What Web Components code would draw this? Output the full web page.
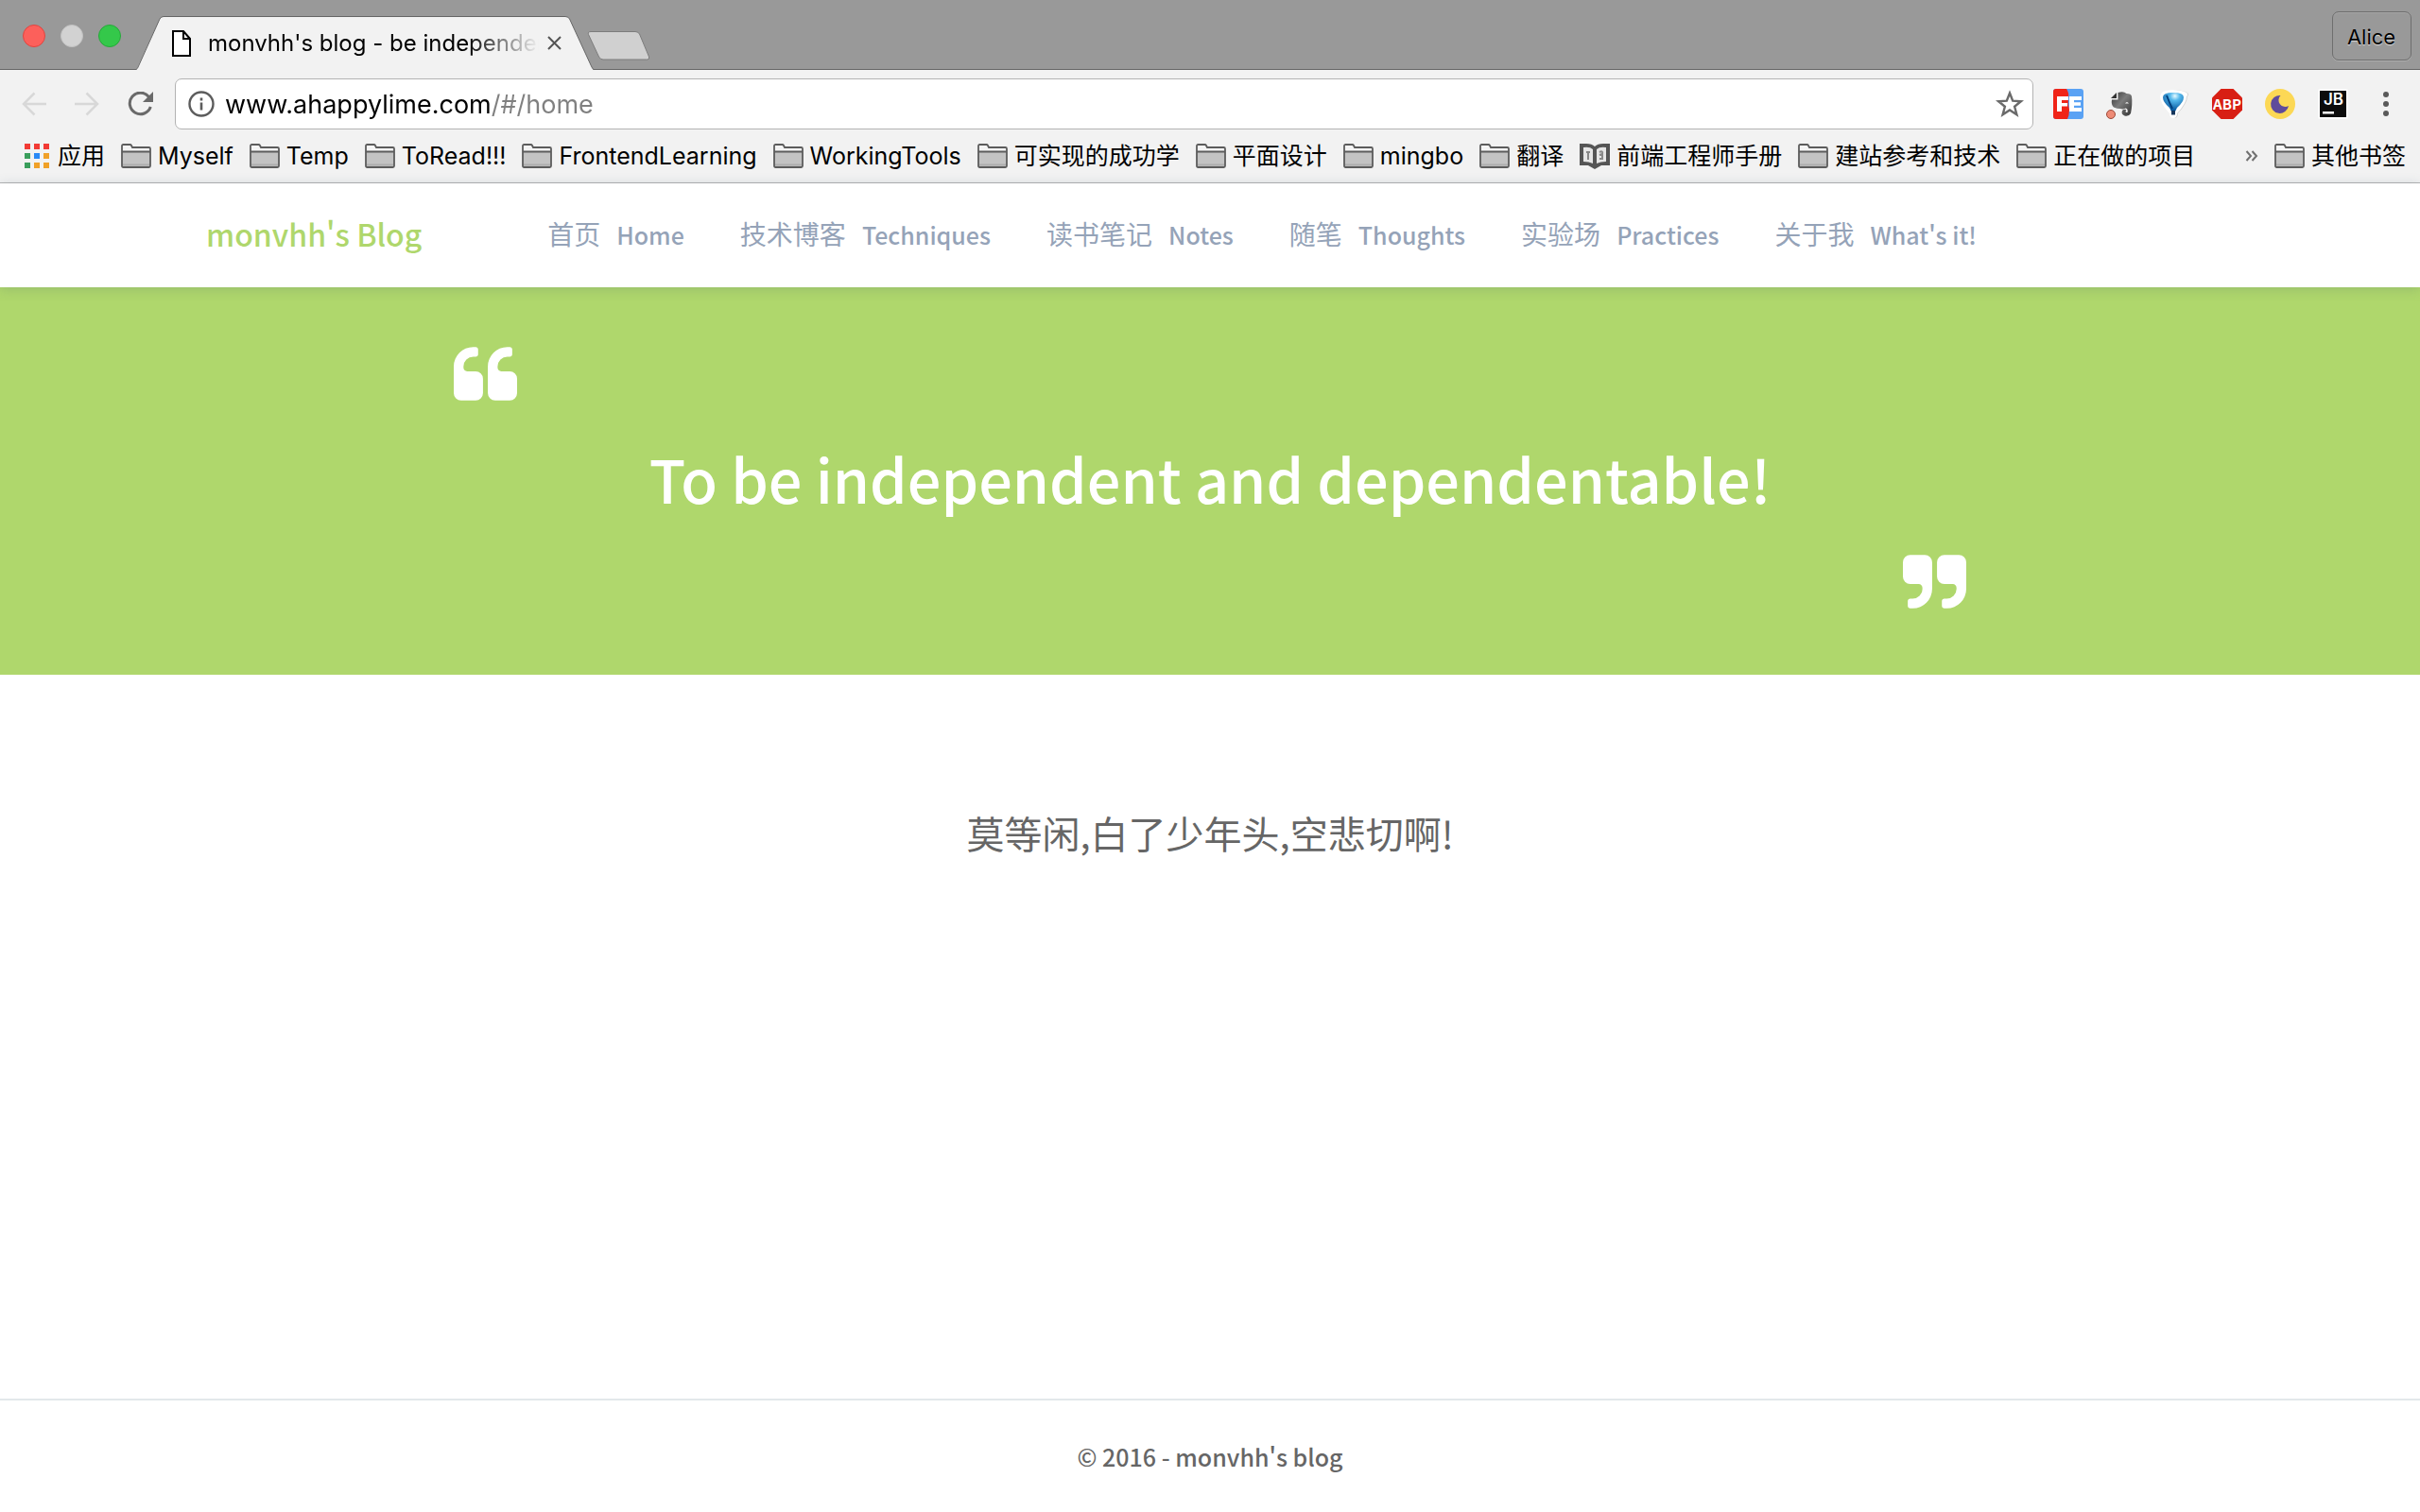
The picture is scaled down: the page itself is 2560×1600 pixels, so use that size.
<!DOCTYPE html>
<html lang="zh-CN">
<head>
<meta charset="utf-8">
<title>monvhh's blog - be independent</title>
<style>
  body { margin: 0; background: #fff; }
</style>
</head>
<body>
<blog-window></blog-window>

<template id="t-window">
  <style>
    :host { display: flex; flex-direction: column; min-height: 100vh; font-family: "Noto Sans CJK SC", sans-serif; color: #666; background: #fff; }
    blog-main { flex: 1; }
  </style>
  <tab-strip></tab-strip>
  <tool-bar></tool-bar>
  <bookmarks-bar></bookmarks-bar>
  <blog-header></blog-header>
  <blog-quote>To be independent and dependentable!</blog-quote>
  <blog-main>莫等闲,白了少年头,空悲切啊!</blog-main>
  <blog-footer>© 2016 - monvhh's blog</blog-footer>
</template>

<template id="t-tabs">
  <style>
    :host { display: flex; align-items: flex-end; height: 74px; padding: 0 9px 0 24px; box-sizing: border-box;
      background: linear-gradient(#666, #666) bottom / 100% 1px no-repeat #999; font-family: Inter, sans-serif; color: #000; }
    button { border: 0; padding: 0; margin: 0; background: none; font: inherit; color: inherit; display: block; }
    svg { display: block; }
    .lights { display: flex; gap: 16px; padding-bottom: 24px; margin-right: 16px; }
    .lights button { width: 24px; height: 24px; border-radius: 50%; box-sizing: border-box; border: 1px solid var(--rim); background: var(--fill); }
    .close { --fill: #fc605b; --rim: #e0443f; }
    .min { --fill: #d2d2d2; --rim: #c2c2c2; }
    .max { --fill: #34c84a; --rim: #27a83a; }
    .tab { position: relative; display: flex; align-items: center; width: 484px; height: 57px; box-sizing: border-box; padding: 0 34px 0 38px; }
    .shape { position: absolute; inset: 0; }
    .tab > :not(.shape) { position: relative; }
    .title { flex: 1; margin: 0 9px 0 18px; overflow: hidden; white-space: nowrap; font-size: 24px; line-height: 36px;
      -webkit-mask-image: linear-gradient(90deg, #000 78%, transparent); mask-image: linear-gradient(90deg, #000 78%, transparent); }
    .new { margin: 0 0 9px -7px; }
    .user { margin: 0 0 10px auto; width: 84px; height: 52px; box-sizing: border-box; border: 1px solid #6e6e6e; border-radius: 7px;
      padding: 2px 1px 0 0; font-size: 22px; text-shadow: 0 1px 1px #ddd; box-shadow: 0 1px 0 #adadad, inset 0 1px 0 #a6a6a6; }
  </style>
  <div class="lights">
    <button class="close" aria-label="Close window"></button>
    <button class="min" aria-label="Minimise"></button>
    <button class="max" aria-label="Zoom"></button>
  </div>
  <div class="tab">
    <svg class="shape" width="484" height="57" viewBox="0 0 484 57"><path d="M0 57 L1 55.500 L25 3 Q26.500 .5 29 .5 H454 Q457 .5 458.500 3 L482 54 Q483 56.500 484 57z" fill="#f2f2f2"/><path d="M0 56.500 Q1.500 56 2.500 53 L25 3 Q26.500 .5 29 .5 H454 Q457 .5 458.500 3 L481.500 53 Q483 56.500 484 56.500" fill="none" stroke="#666"/></svg>
    <svg width="20" height="28" viewBox="0 0 20 28"><path d="M1 1h11l7 8v18H1z" fill="#fff" stroke="#000" stroke-width="2"/><path d="M12 1v8h7" fill="none" stroke="#000" stroke-width="2"/></svg>
    <span class="title">monvhh's blog - be independent</span>
    <button aria-label="Close tab"><svg width="15" height="15" viewBox="0 0 15 15"><path d="M1 1l13 13M14 1L1 14" stroke="#555" stroke-width="2" fill="none"/></svg></button>
  </div>
  <button class="new" aria-label="New tab"><svg width="67" height="33" viewBox="0 0 67 33"><path d="M4 1.500H51Q54 1.500 55.500 4L65.500 28Q66.500 31 63.500 31H17Q14 31 12.500 28L1.500 4.500Q.5 1.500 4 1.500z" fill="#d0d0d0" stroke="#7c7c7c"/></svg></button>
  <button class="user">Alice</button>
</template>

<template id="t-tool">
  <style>
    :host { display: flex; align-items: center; padding: 9px 33px 0 23px; background: #f2f2f2; font-family: Inter, sans-serif; }
    button { border: 0; padding: 0; margin: 0; background: none; display: block; }
    svg { display: block; }
    .nav { display: flex; gap: 30px; margin-right: 23px; }
    .box { flex: 1; display: flex; align-items: center; height: 54px; box-sizing: border-box; padding: 0 9px 0 13px; border: 1px solid #b3b3b3; border-radius: 7px; background: #fff; }
    input { flex: 1; min-width: 0; margin: 0 12px 0 11px; padding: 2px 0 0; border: 0; outline: 0; font: 27px/40px Inter, sans-serif; color: #808080;
      background: linear-gradient(90deg, #000 280px, #808080 280px); -webkit-background-clip: text; background-clip: text; -webkit-text-fill-color: transparent; }
    .ext { display: flex; gap: 24px; margin: 0 37px 0 21px; }
  </style>
  <div class="nav">
    <button aria-label="Back"><svg width="26" height="26" viewBox="0 0 26 26"><path d="M26 13H2M13.500 1.500L2 13l11.500 11.500" fill="none" stroke="#d8d8d8" stroke-width="2.500"/></svg></button>
    <button aria-label="Forward"><svg width="26" height="26" viewBox="0 0 26 26"><path d="M0 13h24M12.500 1.500L24 13 12.500 24.500" fill="none" stroke="#d8d8d8" stroke-width="2.500"/></svg></button>
    <button aria-label="Reload"><svg width="27" height="26" viewBox="0 0 27 26"><path d="M22.500 5.500A11.300 11.300 0 1 0 24.300 16" fill="none" stroke="#6a6a6a" stroke-width="3"/><path d="M27 0v11H16z" fill="#6a6a6a"/></svg></button>
  </div>
  <div class="box">
    <svg width="28" height="28" viewBox="0 0 28 28"><circle cx="14" cy="14" r="12.500" fill="none" stroke="#5c5c5c" stroke-width="2.400"/><path d="M14 12.500v8M14 7.500v3" stroke="#5c5c5c" stroke-width="2.600"/></svg>
    <input type="text" aria-label="Address" value="www.ahappylime.com/#/home" spellcheck="false">
    <button aria-label="Bookmark this page"><svg width="30" height="30" viewBox="0 0 30 30"><path d="M15 3.500l3.200 8.200 8.700.5-6.800 5.500 2.300 8.500-7.400-4.800-7.400 4.800 2.300-8.500-6.800-5.500 8.700-.5z" fill="none" stroke="#6a6a6a" stroke-width="2.400"/></svg></button>
  </div>
  <div class="ext">
    <button aria-label="FE helper"><svg width="32" height="32" viewBox="0 0 32 32"><rect width="32" height="32" rx="3" fill="#5aa2f4"/><path d="M3 0h11q3 4 2 10t1 12q0 6-2 10H3q-3 0-3-3V3q0-3 3-3z" fill="#f02418"/><path d="M4 24V8h12v4H9v3h6v3.500H9V24zM17 8h13v4h-8v2.300h7v3.400h-7V20h8v4H17z" fill="#fff"/></svg></button>
    <button aria-label="Web clipper"><svg width="32" height="32" viewBox="0 0 32 32"><defs><linearGradient id="e" x2="1" y2="1"><stop stop-color="#333"/><stop offset=".45" stop-color="#7c7c7c"/><stop offset="1" stop-color="#333"/></linearGradient></defs><path d="M12.500 4q6-2 9 1 5 0 5.500 3 1 8-1 18-2 3.500-6.500 2.500-4-1.500-2.500-5.500 2-2 4-1 .5 1-.5 1.500 0 2 2 1.500 1-4-2-4.500-2.500 1.500-5.500.5-3.500 0-7-1.500-3-3-2-8h6.500z" fill="url(#e)"/><path d="M11 4v6H5z" fill="#333"/><path d="M20 15.500q2-3 4 0z" fill="#eee"/><circle cx="5" cy="27" r="4.500" fill="#ee8b76" stroke="#9c4a3a"/></svg></button>
    <button aria-label="Balloon"><svg width="32" height="32" viewBox="0 0 32 32"><defs><radialGradient id="b" cx=".58" cy=".18" r=".8"><stop stop-color="#e8fbff"/><stop offset=".3" stop-color="#54b8ec"/><stop offset="1" stop-color="#004f98"/></radialGradient></defs><path d="M16 31q-4 0-4-5Q2 15 2 8q0-4 6-6t16 0 6 6q0 7-10 18 0 5-4 5z" fill="#d4d4d4"/><path d="M15 31q-4 0-4-5Q1 15 1 8q0-4 6-6t16 0 6 6q0 7-10 18 0 5-4 5z" fill="#fff"/><path d="M4 9q0-5 11-5t11 5q0 5-7 11l-2 4h-4l-2-4Q4 14 4 9z" fill="url(#b)"/><path d="M8 7q3 8 6 14" stroke="#003f7c" stroke-width="2" fill="none"/><rect x="13" y="23" width="4" height="4.500" fill="#16365c"/></svg></button>
    <button aria-label="Ad blocker"><svg width="32" height="32" viewBox="0 0 32 32"><path d="M9.500 0h13L32 9.500v13L22.500 32h-13L0 22.500v-13z" fill="#d81f14"/><text x="16" y="22" text-anchor="middle" font-family="Noto Sans CJK SC, sans-serif" font-weight="700" font-size="15" fill="#fff">ABP</text></svg></button>
    <button aria-label="Night mode"><svg width="32" height="32" viewBox="0 0 32 32"><circle cx="16" cy="16" r="16" fill="#fcd855"/><path d="M16.500 7A9.500 9.500 0 1 0 25 18 7 7 0 0 1 16.500 7z" fill="#5f4b9b"/></svg></button>
    <button aria-label="JetBrains"><svg width="32" height="32" viewBox="0 0 32 32"><rect x=".5" y=".5" width="31" height="31" fill="#fff"/><rect x="2" y="2" width="28" height="28" fill="#0c0c0c"/><text x="6" y="17" font-family="Inter, sans-serif" font-weight="600" font-size="17" fill="#fff">JB</text><rect x="5" y="24" width="12" height="2.500" fill="#fff"/></svg></button>
  </div>
  <button aria-label="Menu"><svg width="6" height="26" viewBox="0 0 6 26"><g fill="#5a5a5a"><circle cx="3" cy="3" r="3"/><circle cx="3" cy="13" r="3"/><circle cx="3" cy="23" r="3"/></g></svg></button>
</template>

<template id="t-marks">
  <style>
    :host { display: flex; align-items: center; gap: 17px; height: 57px; box-sizing: border-box; padding: 0 15px 0 26px; background: #f2f2f2; border-bottom: 1px solid #b3b3b3; }
    button { margin: 0 0 0 auto; padding: 0; border: 0; background: none; }
    svg { display: block; }
  </style>
  <book-mark kind="apps">应用</book-mark>
  <book-mark>Myself</book-mark>
  <book-mark>Temp</book-mark>
  <book-mark>ToRead!!!</book-mark>
  <book-mark>FrontendLearning</book-mark>
  <book-mark>WorkingTools</book-mark>
  <book-mark>可实现的成功学</book-mark>
  <book-mark>平面设计</book-mark>
  <book-mark>mingbo</book-mark>
  <book-mark>翻译</book-mark>
  <book-mark kind="book">前端工程师手册</book-mark>
  <book-mark>建站参考和技术</book-mark>
  <book-mark>正在做的项目</book-mark>
  <button aria-label="More bookmarks"><svg width="14" height="12" viewBox="0 0 14 12"><path d="M1.500 1l4.500 5-4.500 5M7.500 1L12 6l-4.500 5" fill="none" stroke="#707070" stroke-width="2"/></svg></button>
  <book-mark>其他书签</book-mark>
</template>

<template id="t-mark">
  <style>
    :host { display: block; }
    a { display: flex; align-items: center; gap: 7px; color: #000; text-decoration: none; white-space: nowrap; font: 25px/36px Inter, "Noto Sans CJK SC", sans-serif; }
    svg { display: none; }
    :host(:not([kind])) .folder, :host([kind="apps"]) .apps, :host([kind="book"]) .book { display: block; }
  </style>
  <a href="#">
    <svg class="folder" width="32" height="26" viewBox="0 0 32 26"><path d="M1 24V2.500Q1 1 2.500 1h7q1 0 1.500 1l1 2H29.500Q31 4 31 5.500V24z" fill="#f4f4f4"/><path d="M1 8.500H31V25H1z" fill="#c3c3c3"/><path d="M2 21.500h28v2H2z" fill="#adadad"/><path d="M1 23.500V2.500Q1 1 2.500 1h7q1 0 1.500 1l1 2H29.500Q31 4 31 5.500V23.500Q31 25 29.500 25H2.500Q1 25 1 23.500zM1 8.500H31" fill="none" stroke="#5c5c5c" stroke-width="1.800"/></svg>
    <svg class="apps" width="28" height="26" viewBox="0 0 28 26"><g fill="#f23b35"><path d="M0 0h6v6H0zM10 0h6v6h-6zM20 0h6v6h-6z"/></g><path d="M0 10h6v6H0zM0 20h6v6H0z" fill="#3a9e5c"/><path d="M10 10h6v6h-6z" fill="#2a8af6"/><path d="M20 10h6v6h-6zM10 20h6v6h-6zM20 20h6v6h-6z" fill="#f0a128"/></svg>
    <svg class="book" width="32" height="28" viewBox="0 0 32 28"><path d="M0 1h7q6 0 9 3 3-3 9-3h7v23h-9l-7 4-7-4H0z" fill="#555"/><path d="M4 5q7-1 10 2v15q-4-2-10-2zM28 5q-7-1-10 2v15q4-2 10-2z" fill="#e6e6e6"/><path d="M9 10v8M7 10h4M21 10q4-2 3 2l-3 1M24 12v5h-3" stroke="#888" stroke-width="2" fill="none"/></svg>
    <slot></slot>
  </a>
</template>

<template id="t-header">
  <style>
    :host { display: block; position: relative; background: #fff; box-shadow: 0 2px 12px rgba(60, 90, 110, .22); }
    header { display: flex; align-items: center; height: 110px; box-sizing: border-box; padding: 0 218px 4px; font-weight: 500; }
    .brand { margin-right: 133px; font-size: 32px; line-height: 48px; color: #afd76c; text-decoration: none; white-space: nowrap; }
    nav { display: flex; gap: 59px; }
  </style>
  <header>
    <a class="brand" href="#">monvhh's Blog</a>
    <nav>
      <nav-item zh="首页">Home</nav-item>
      <nav-item zh="技术博客">Techniques</nav-item>
      <nav-item zh="读书笔记">Notes</nav-item>
      <nav-item zh="随笔">Thoughts</nav-item>
      <nav-item zh="实验场">Practices</nav-item>
      <nav-item zh="关于我">What's it!</nav-item>
    </nav>
  </header>
</template>

<template id="t-nav">
  <style>
    :host { display: block; }
    a { display: flex; align-items: baseline; gap: 17px; color: #95a3b8; text-decoration: none; white-space: nowrap; font-size: 25px; line-height: 40px; }
    .zh { font-size: 28px; font-weight: 400; }
  </style>
  <a href="#"><span class="zh"></span><slot></slot></a>
</template>

<template id="t-quote">
  <style>
    :host { display: flex; flex-direction: column; gap: 34px; padding: 63px 480px 70px; background: #afd76c; color: #fff; }
    svg { display: block; fill: currentColor; }
    .end { align-self: flex-end; }
    h1 { margin: 0; font-size: 63px; line-height: 95px; font-weight: 500; text-align: center; white-space: nowrap; }
  </style>
  <svg width="67" height="57" viewBox="64 128 1664 1408"><path d="M832 960v384q0 80-56 136t-136 56h-384q-80 0-136-56t-56-136v-704q0-104 40.500-198.500t109.500-163.500 163.500-109.500 198.500-40.500h64q26 0 45 19t19 45v128q0 26-19 45t-45 19h-64q-106 0-181 75t-75 181v32q0 40 28 68t68 28h224q80 0 136 56t56 136zm896 0v384q0 80-56 136t-136 56h-384q-80 0-136-56t-56-136v-704q0-104 40.500-198.500t109.500-163.500 163.500-109.500 198.500-40.500h64q26 0 45 19t19 45v128q0 26-19 45t-45 19h-64q-106 0-181 75t-75 181v32q0 40 28 68t68 28h224q80 0 136 56t56 136z"/></svg>
  <h1><slot></slot></h1>
  <svg class="end" width="67" height="57" viewBox="64 128 1664 1408"><path d="M832 320v704q0 104-40.500 198.500t-109.500 163.500-163.500 109.500-198.500 40.500h-64q-26 0-45-19t-19-45v-128q0-26 19-45t45-19h64q106 0 181-75t75-181v-32q0-40-28-68t-68-28h-224q-80 0-136-56t-56-136v-384q0-80 56-136t136-56h384q80 0 136 56t56 136zm896 0v704q0 104-40.500 198.500t-109.500 163.500-163.500 109.500-198.500 40.500h-64q-26 0-45-19t-19-45v-128q0-26 19-45t45-19h64q106 0 181-75t75-181v-32q0-40-28-68t-68-28h-224q-80 0-136-56t-56-136v-384q0-80 56-136t136-56h384q80 0 136 56t56 136z"/></svg>
</template>

<template id="t-main">
  <style>
    :host { display: block; padding-top: 137px; }
    p { margin: 0; text-align: center; font-size: 40px; line-height: 60px; }
  </style>
  <p><slot></slot></p>
</template>

<template id="t-footer">
  <style>
    :host { display: block; border-top: 2px solid #e3e8eb; }
    p { margin: 0; padding: 39px 0; text-align: center; font-size: 25px; line-height: 40px; font-weight: 500; }
  </style>
  <p><slot></slot></p>
</template>

<script>
  class BaseElement extends HTMLElement {
    constructor() {
      super();
      const template = document.getElementById(this.constructor.template);
      this.attachShadow({ mode: 'open' }).append(template.content.cloneNode(true));
    }
  }
  class NavItem extends BaseElement {
    static template = 't-nav';
    connectedCallback() {
      this.shadowRoot.querySelector('.zh').textContent = this.getAttribute('zh');
    }
  }
  customElements.define('nav-item', NavItem);
  customElements.define('book-mark', class extends BaseElement { static template = 't-mark'; });
  customElements.define('tab-strip', class extends BaseElement { static template = 't-tabs'; });
  customElements.define('tool-bar', class extends BaseElement { static template = 't-tool'; });
  customElements.define('bookmarks-bar', class extends BaseElement { static template = 't-marks'; });
  customElements.define('blog-header', class extends BaseElement { static template = 't-header'; });
  customElements.define('blog-quote', class extends BaseElement { static template = 't-quote'; });
  customElements.define('blog-main', class extends BaseElement { static template = 't-main'; });
  customElements.define('blog-footer', class extends BaseElement { static template = 't-footer'; });
  customElements.define('blog-window', class extends BaseElement { static template = 't-window'; });
</script>
</body>
</html>
